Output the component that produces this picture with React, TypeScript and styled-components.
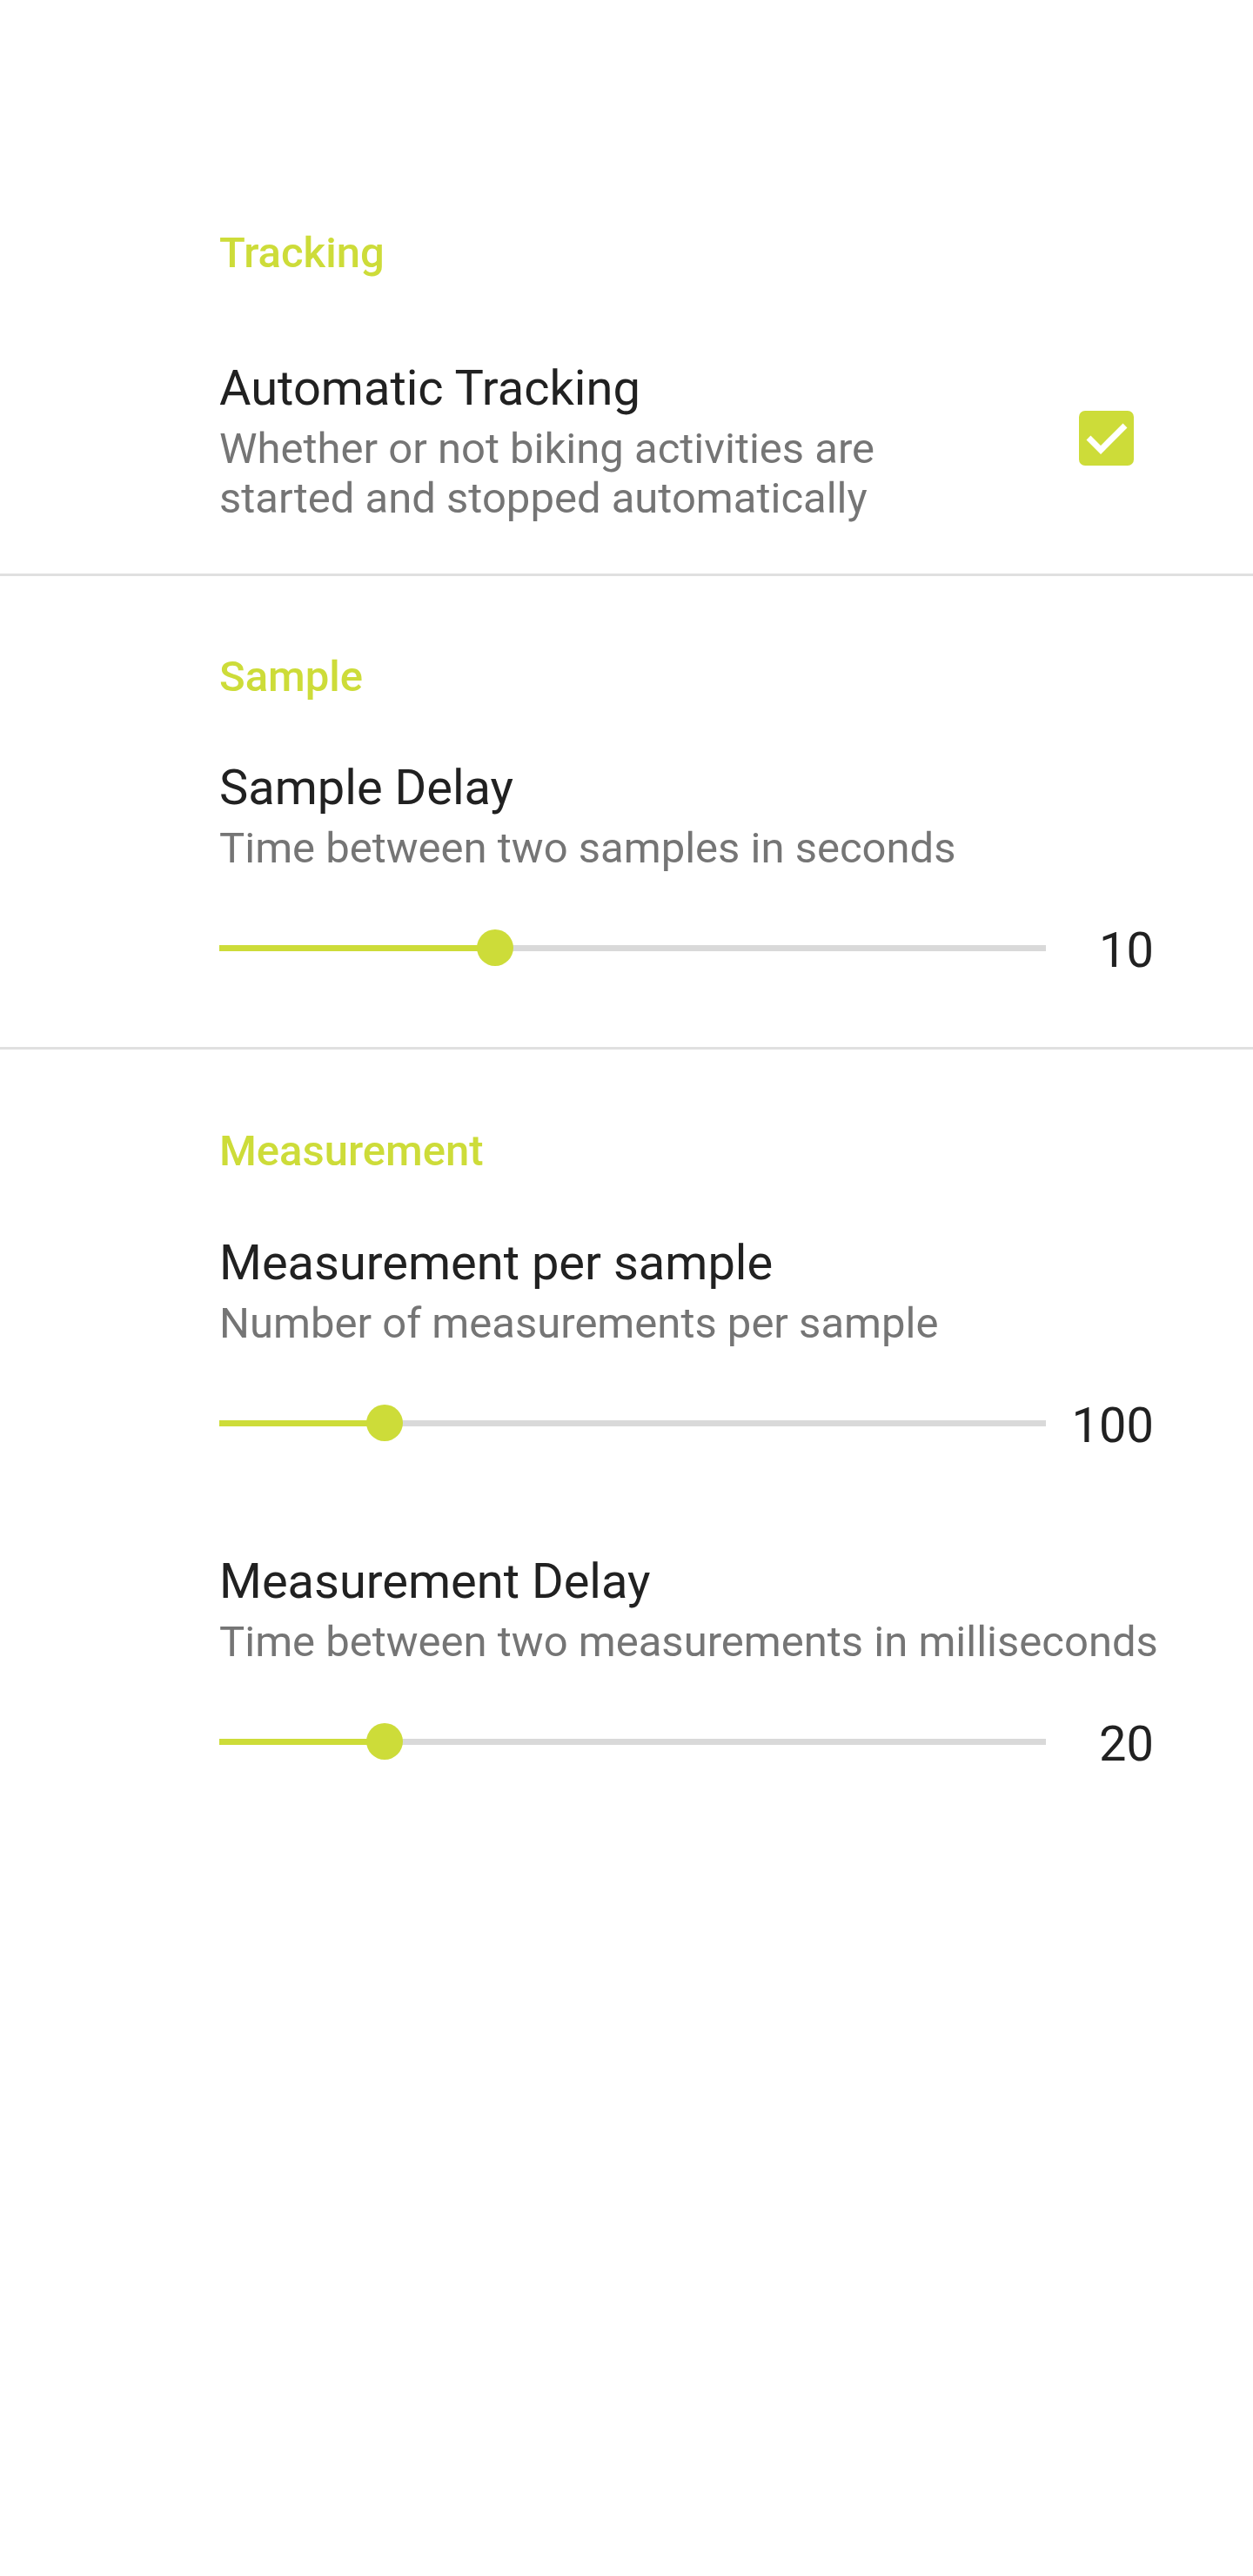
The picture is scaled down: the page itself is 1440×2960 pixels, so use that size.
import React from "react";
import styled, { createGlobalStyle } from "styled-components";

const GlobalStyle = createGlobalStyle`
  html, body {
    margin: 0;
    padding: 0;
    background: #ffffff;
  }
  body {
    font-family: Roboto, "Noto Sans", "Liberation Sans", sans-serif;
    -webkit-font-smoothing: antialiased;
  }
`;

const ACCENT = "#cddc39";

const Screen = styled.div`
  width: 1440px;
  min-height: 2960px;
  background: #ffffff;
`;

const Section = styled.section<{ $top: number; $bottom: number }>`
  padding-top: ${(p) => p.$top}px;
  padding-bottom: ${(p) => p.$bottom}px;
`;

const Divider = styled.div`
  height: 3px;
  background: #e0e0e0;
`;

const CategoryTitle = styled.div<{ $gap: number }>`
  padding-left: 252px;
  margin-bottom: ${(p) => p.$gap}px;
  font-size: 49px;
  line-height: 57px;
  font-weight: 500;
  color: ${ACCENT};
`;

const Pref = styled.div<{ $top?: number }>`
  padding-left: 252px;
  padding-top: ${(p) => p.$top ?? 0}px;
`;

const CheckRow = styled.div`
  display: flex;
  align-items: center;
  padding-right: 137px;
`;

const TextBlock = styled.div`
  flex: 1;
  min-width: 0;
  margin-right: 100px;
`;

const Title = styled.div`
  font-size: 56px;
  line-height: 66px;
  color: #212121;
`;

const Summary = styled.div`
  margin-top: 8px;
  font-size: 49px;
  line-height: 57px;
  color: #757575;
`;

const Checkbox = styled.div`
  width: 63px;
  height: 63px;
  border-radius: 7px;
  background: ${ACCENT};
  margin-bottom: 7px;
  flex-shrink: 0;

  svg {
    display: block;
  }
`;

const SliderRow = styled.div`
  display: flex;
  align-items: center;
  height: 66px;
  margin-top: 56px;
  margin-right: 114px;
`;

const Track = styled.div`
  position: relative;
  flex: 1;
  height: 7px;
  margin-top: -6px;
  background: #d9d9d9;
`;

const TrackFill = styled.div`
  position: absolute;
  left: 0;
  top: 0;
  bottom: 0;
  background: ${ACCENT};
`;

const Thumb = styled.div`
  position: absolute;
  top: 50%;
  width: 42px;
  height: 42px;
  border-radius: 50%;
  background: ${ACCENT};
  transform: translate(-50%, -50%);
`;

const Value = styled.div`
  width: 100px;
  margin-left: 24px;
  text-align: right;
  font-size: 56px;
  line-height: 66px;
  color: #212121;
`;

function Slider({ fraction, value }: { fraction: number; value: string }) {
  const pct = `${fraction * 100}%`;
  return (
    <SliderRow>
      <Track>
        <TrackFill style={{ width: pct }} />
        <Thumb style={{ left: pct }} />
      </Track>
      <Value>{value}</Value>
    </SliderRow>
  );
}

function SliderPref(props: {
  title: string;
  summary: string;
  fraction: number;
  value: string;
  top?: number;
}) {
  return (
    <Pref $top={props.top}>
      <Title>{props.title}</Title>
      <Summary>{props.summary}</Summary>
      <Slider fraction={props.fraction} value={props.value} />
    </Pref>
  );
}

export default function App() {
  return (
    <Screen>
      <GlobalStyle />
      <Section $top={262} $bottom={58}>
        <CategoryTitle $gap={94}>Tracking</CategoryTitle>
        <Pref>
          <CheckRow>
            <TextBlock>
              <Title>Automatic Tracking</Title>
              <Summary>Whether or not biking activities are started and stopped automatically</Summary>
            </TextBlock>
            <Checkbox>
              <svg width="63" height="63" viewBox="0 0 63 63">
                <path d="M11 31 L25 45 L53 17" fill="none" stroke="#ffffff" strokeWidth="7" />
              </svg>
            </Checkbox>
          </CheckRow>
        </Pref>
      </Section>
      <Divider />
      <Section $top={87} $bottom={78}>
        <CategoryTitle $gap={66}>Sample</CategoryTitle>
        <SliderPref title="Sample Delay" summary="Time between two samples in seconds" fraction={1 / 3} value="10" />
      </Section>
      <Divider />
      <Section $top={88} $bottom={0}>
        <CategoryTitle $gap={67}>Measurement</CategoryTitle>
        <SliderPref title="Measurement per sample" summary="Number of measurements per sample" fraction={0.2} value="100" />
        <SliderPref title="Measurement Delay" summary="Time between two measurements in milliseconds" fraction={0.2} value="20" top={113} />
      </Section>
    </Screen>
  );
}
